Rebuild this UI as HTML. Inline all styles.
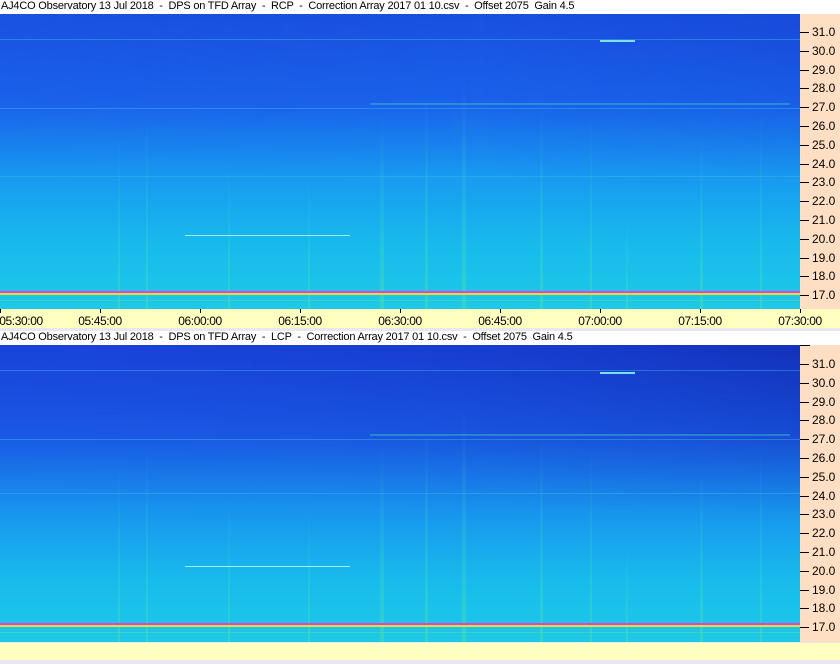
<!DOCTYPE html>
<html><head><style>
*{margin:0;padding:0}
body{width:840px;height:664px;background:#e8e6ee;position:relative;overflow:hidden;font-family:"Liberation Sans",sans-serif}
.t{position:absolute;left:0;width:840px;height:14px;background:#fff;font-size:11px;line-height:13px;padding-left:1px;color:#000;white-space:pre;letter-spacing:-0.2px}
.ax{position:absolute;left:800px;width:40px;background:#ffdfc4}
.yl{position:absolute;left:0;font-size:12px;line-height:12px}
.yl:before{content:"";position:absolute;left:0;top:6px;width:9px;height:1px;background:#000}
.yl span{position:absolute;left:12px;top:0}
.tb{position:absolute;left:0;width:840px;background:#ffffc0}
.tl{position:absolute;top:5px;font-size:12px;letter-spacing:-0.4px;transform:translateX(-50%)}
.tk{position:absolute;top:0;width:1px;height:4px;background:#000}
</style></head><body>
<div class="t" style="top:0">AJ4CO Observatory 13 Jul 2018  -  DPS on TFD Array  -  RCP  -  Correction Array 2017 01 10.csv  -  Offset 2075  Gain 4.5</div>
<div class="t" style="top:331px">AJ4CO Observatory 13 Jul 2018  -  DPS on TFD Array  -  LCP  -  Correction Array 2017 01 10.csv  -  Offset 2075  Gain 4.5</div>

<svg style="position:absolute;left:0;top:14px" width="800" height="295">
<defs>
<linearGradient id="g1" x1="0" y1="0" x2="0" y2="1">
<stop offset="0" stop-color="#1a50e0"/><stop offset="0.3" stop-color="#1a62ea"/><stop offset="0.55" stop-color="#189af0"/><stop offset="0.8" stop-color="#18bcec"/><stop offset="1" stop-color="#1ec8e6"/></linearGradient>
<linearGradient id="h1" x1="0" y1="0" x2="1" y2="0">
<stop offset="0" stop-color="#2060f0" stop-opacity="0.1"/><stop offset="0.6" stop-color="#1030c0" stop-opacity="0"/><stop offset="1" stop-color="#1030c0" stop-opacity="0.2"/></linearGradient>
<linearGradient id="fade" x1="0" y1="0" x2="0" y2="1"><stop offset="0" stop-color="#fff"/><stop offset="0.6" stop-color="#000"/></linearGradient>
<mask id="m"><rect width="800" height="297" fill="url(#fade)"/></mask>
<linearGradient id="v" x1="0" y1="0" x2="0" y2="1"><stop offset="0" stop-color="#40e0e0" stop-opacity="0"/><stop offset="1" stop-color="#60f090" stop-opacity="0.3"/></linearGradient>
</defs>
<rect width="800" height="295" fill="url(#g1)"/>
<rect width="800" height="295" fill="url(#h1)" mask="url(#m)"/>
<g fill="url(#v)">
<rect x="118" y="120" width="2" height="175"/><rect x="146" y="100" width="2" height="195"/><rect x="228" y="150" width="2" height="145"/><rect x="308" y="160" width="2" height="135"/><rect x="380" y="100" width="4" height="195"/><rect x="425" y="80" width="3" height="215"/><rect x="462" y="60" width="4" height="235"/><rect x="540" y="90" width="3" height="205"/><rect x="590" y="100" width="2" height="195"/><rect x="626" y="200" width="2" height="95"/><rect x="700" y="120" width="3" height="175"/><rect x="760" y="100" width="2" height="195"/>
</g>
<g opacity="0.4" fill="#40c0f0"><rect y="25" width="800" height="1"/><rect y="94" width="800" height="1"/><rect y="162" width="800" height="1"/></g>
<rect x="185" y="221" width="165" height="1" fill="#a0f0f0"/>
<rect x="370" y="89" width="420" height="2" fill="#40d0c0" opacity="0.4"/>
<rect x="600" y="26" width="35" height="2" fill="#80e0f0"/>
<rect y="277" width="800" height="2" fill="#e040e0"/>
<rect y="279" width="800" height="2" fill="#e0e030"/>
<rect y="286" width="800" height="1" fill="#60e0a0" opacity="0.5"/>
</svg>

<svg style="position:absolute;left:0;top:345px" width="800" height="297">
<defs>
<linearGradient id="g2" x1="0" y1="0" x2="0" y2="1">
<stop offset="0" stop-color="#1a40d8"/><stop offset="0.3" stop-color="#1a58e4"/><stop offset="0.55" stop-color="#1894ee"/><stop offset="0.8" stop-color="#18bcec"/><stop offset="1" stop-color="#1ec8e6"/></linearGradient>
<linearGradient id="h2" x1="0" y1="0" x2="1" y2="0">
<stop offset="0" stop-color="#2060f0" stop-opacity="0.1"/><stop offset="0.5" stop-color="#1030b0" stop-opacity="0.15"/><stop offset="1" stop-color="#0c2098" stop-opacity="0.45"/></linearGradient>
</defs>
<rect width="800" height="297" fill="url(#g2)"/>
<rect width="800" height="297" fill="url(#h2)" mask="url(#m)"/>
<g fill="url(#v)">
<rect x="118" y="120" width="2" height="177"/><rect x="146" y="100" width="2" height="197"/><rect x="228" y="150" width="2" height="147"/><rect x="308" y="160" width="2" height="137"/><rect x="380" y="100" width="4" height="197"/><rect x="425" y="80" width="3" height="217"/><rect x="462" y="60" width="4" height="237"/><rect x="540" y="90" width="3" height="207"/><rect x="590" y="100" width="2" height="197"/><rect x="626" y="200" width="2" height="97"/><rect x="700" y="120" width="3" height="177"/><rect x="760" y="100" width="2" height="197"/>
</g>
<g opacity="0.4" fill="#40c0f0"><rect y="25" width="800" height="1"/><rect y="94" width="800" height="1"/><rect y="148" width="800" height="1"/></g>
<rect x="185" y="221" width="165" height="1" fill="#a0f0f0"/>
<rect x="370" y="89" width="420" height="2" fill="#40d0c0" opacity="0.4"/>
<rect x="600" y="27" width="35" height="2" fill="#80e0f0"/>
<rect y="278" width="800" height="2" fill="#e040e0"/>
<rect y="280" width="800" height="2" fill="#e0e030"/>
<rect y="287" width="800" height="1" fill="#60e0a0" opacity="0.5"/>
</svg>

<div class="ax" style="top:14px;height:295px">
<div class="yl" style="top:12px"><span>31.0</span></div><div class="yl" style="top:31px"><span>30.0</span></div><div class="yl" style="top:50px"><span>29.0</span></div><div class="yl" style="top:68px"><span>28.0</span></div><div class="yl" style="top:87px"><span>27.0</span></div><div class="yl" style="top:106px"><span>26.0</span></div><div class="yl" style="top:125px"><span>25.0</span></div><div class="yl" style="top:144px"><span>24.0</span></div><div class="yl" style="top:162px"><span>23.0</span></div><div class="yl" style="top:181px"><span>22.0</span></div><div class="yl" style="top:200px"><span>21.0</span></div><div class="yl" style="top:219px"><span>20.0</span></div><div class="yl" style="top:238px"><span>19.0</span></div><div class="yl" style="top:256px"><span>18.0</span></div><div class="yl" style="top:275px"><span>17.0</span></div>
</div>
<div class="ax" style="top:345px;height:297px">
<div class="yl" style="top:13px"><span>31.0</span></div><div class="yl" style="top:32px"><span>30.0</span></div><div class="yl" style="top:51px"><span>29.0</span></div><div class="yl" style="top:69px"><span>28.0</span></div><div class="yl" style="top:88px"><span>27.0</span></div><div class="yl" style="top:107px"><span>26.0</span></div><div class="yl" style="top:126px"><span>25.0</span></div><div class="yl" style="top:145px"><span>24.0</span></div><div class="yl" style="top:163px"><span>23.0</span></div><div class="yl" style="top:182px"><span>22.0</span></div><div class="yl" style="top:201px"><span>21.0</span></div><div class="yl" style="top:220px"><span>20.0</span></div><div class="yl" style="top:239px"><span>19.0</span></div><div class="yl" style="top:257px"><span>18.0</span></div><div class="yl" style="top:276px"><span>17.0</span></div>
<div style="position:absolute;left:0;top:0;width:10px;height:1px;background:#000"></div>
</div>

<div class="tb" style="top:309px;height:19px">
<div class="tk" style="left:0"></div><div class="tk" style="left:100px"></div><div class="tk" style="left:200px"></div><div class="tk" style="left:300px"></div><div class="tk" style="left:400px"></div><div class="tk" style="left:500px"></div><div class="tk" style="left:600px"></div><div class="tk" style="left:700px"></div><div class="tk" style="left:800px"></div>
<div class="tl" style="left:21px">05:30:00</div><div class="tl" style="left:100px">05:45:00</div><div class="tl" style="left:200px">06:00:00</div><div class="tl" style="left:300px">06:15:00</div><div class="tl" style="left:400px">06:30:00</div><div class="tl" style="left:500px">06:45:00</div><div class="tl" style="left:600px">07:00:00</div><div class="tl" style="left:700px">07:15:00</div><div class="tl" style="left:800px">07:30:00</div>
</div>
<div class="tb" style="top:643px;height:17px"></div>
</body></html>
